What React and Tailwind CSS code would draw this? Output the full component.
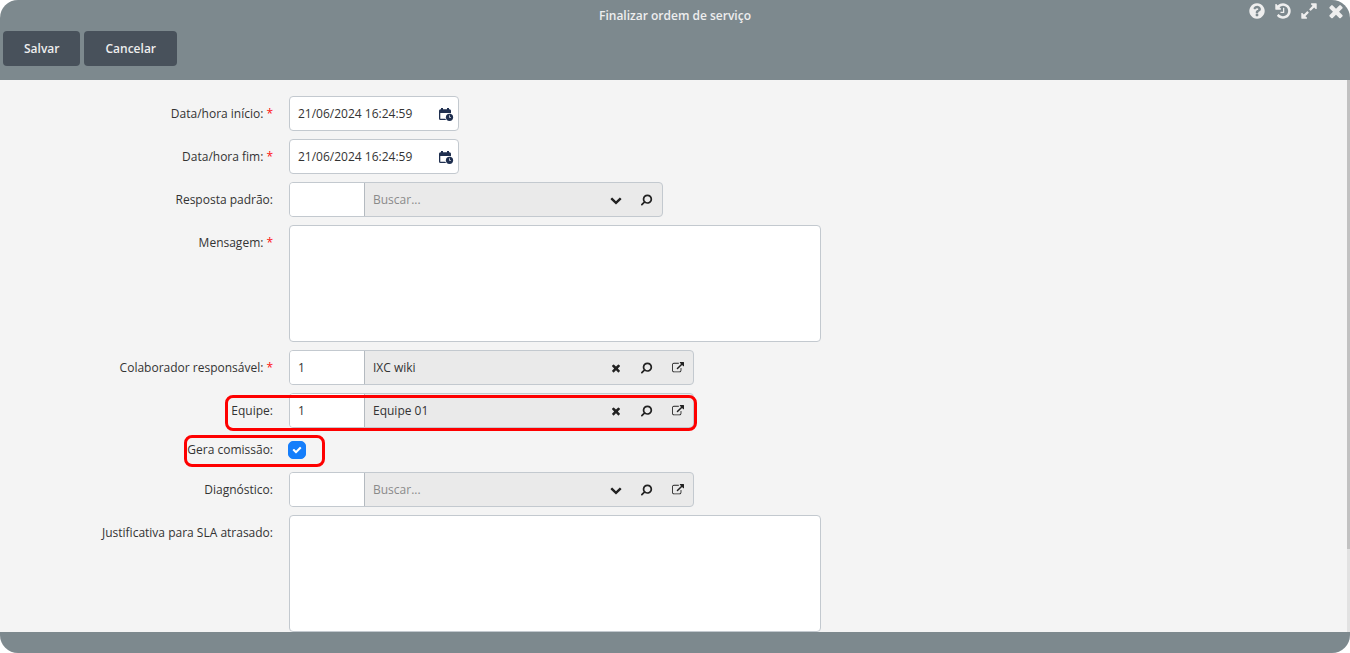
import React, { useState } from "react";

const ICONS = {
	help: "M1024 1376v-192q0-14-9-23t-23-9h-192q-14 0-23 9t-9 23v192q0 14 9 23t23 9h192q14 0 23-9t9-23zm256-672q0-88-55.5-163t-138.5-116-170-41q-243 0-371 213-15 24 8 42l132 100q7 6 19 6 16 0 25-12 53-68 86-92 34-24 86-24 48 0 85.5 26t37.5 59q0 38-20 61t-68 45q-63 28-115.5 86.5t-52.5 125.5v36q0 14 9 23t23 9h192q14 0 23-9t9-23q0-19 21.5-49.5t54.5-49.5q32-18 49-28.5t46-35 44.5-48 28-60.5 12.5-81zm384 192q0 209-103 385.5t-279.5 279.5-385.5 103-385.5-103-279.5-279.5-103-385.5 103-385.5 279.5-279.5 385.5-103 385.5 103 279.5 279.5 103 385.5z",
	history:
		"M1664 896q0 156-61 298t-164 245-245 164-298 61q-172 0-327-72.5t-264-204.5q-7-10-6.5-22.5t8.5-20.5l137-138q10-9 25-9 16 2 23 12 73 95 179 147t225 52q104 0 198.5-40.5t163.5-109.5 109.5-163.5 40.5-198.5-40.5-198.5-109.5-163.5-163.5-109.5-198.5-40.5q-98 0-188 35.5t-160 101.5l137 138q31 30 14 69-17 40-59 40h-448q-26 0-45-19t-19-45v-448q0-42 40-59 39-17 69 14l130 129q107-101 244.5-156.5t284.5-55.5q156 0 298 61t245 164 164 245 61 298zm-640-288v448q0 14-9 23t-23 9h-320q-14 0-23-9t-9-23v-64q0-14 9-23t23-9h224v-352q0-14 9-23t23-9h64q14 0 23 9t9 23z",
	expand: "M883 1056q0 13-10 23l-332 332 144 144q19 19 19 45t-19 45-45 19h-448q-26 0-45-19t-19-45v-448q0-26 19-45t45-19 45 19l144 144 332-332q10-10 23-10t23 10l114 114q10 10 10 23zm781-864v448q0 26-19 45t-45 19-45-19l-144-144-332 332q-10 10-23 10t-23-10l-114-114q-10-10-10-23t10-23l332-332-144-144q-19-19-19-45t19-45 45-19h448q26 0 45 19t19 45z",
	times: "M1490 1322q0 40-28 68l-136 136q-28 28-68 28t-68-28l-294-294-294 294q-28 28-68 28t-68-28l-136-136q-28-28-28-68t28-68l294-294-294-294q-28-28-28-68t28-68l136-136q28-28 68-28t68 28l294 294 294-294q28-28 68-28t68 28l136 136q28 28 28 68t-28 68l-294 294 294 294q28 28 28 68z",
	chevron:
		"M1683 808l-742 741q-19 19-45 19t-45-19l-742-741q-19-19-19-45.5t19-45.5l166-165q19-19 45-19t45 19l531 531 531-531q19-19 45-19t45 19l166 165q19 19 19 45.5t-19 45.5z",
	search: "M1216 832q0-185-131.5-316.5t-316.5-131.5-316.5 131.5-131.5 316.5 131.5 316.5 316.5 131.5 316.5-131.5 131.5-316.5zm512 832q0 52-38 90t-90 38q-54 0-90-38l-343-342q-179 124-399 124-143 0-273.5-55.5t-225-150-150-225-55.5-273.5 55.5-273.5 150-225 225-150 273.5-55.5 273.5 55.5 225 150 150 225 55.5 273.5q0 220-124 399l343 343q37 37 37 90z",
	external:
		"M1408 928v320q0 119-84.5 203.5t-203.5 84.5h-832q-119 0-203.5-84.5t-84.5-203.5v-832q0-119 84.5-203.5t203.5-84.5h704q14 0 23 9t9 23v64q0 14-9 23t-23 9h-704q-66 0-113 47t-47 113v832q0 66 47 113t113 47h832q66 0 113-47t47-113v-320q0-14 9-23t23-9h64q14 0 23 9t9 23zm384-864v512q0 26-19 45t-45 19-45-19l-176-176-652 652q-10 10-23 10t-23-10l-114-114q-10-10-10-23t10-23l652-652-176-176q-19-19-19-45t19-45 45-19h512q26 0 45 19t19 45z",
	check: "M1671 566q0 40-28 68l-724 724-136 136q-28 28-68 28t-68-28l-136-136-362-362q-28-28-28-68t28-68l136-136q28-28 68-28t68 28l294 295 656-657q28-28 68-28t68 28l136 136q28 28 28 68z",
};

const Icon = ({ name, className }) => (
	<svg viewBox="0 0 1792 1792" fill="currentColor" className={className}>
		<path d={ICONS[name]} />
	</svg>
);

const CalendarClockIcon = () => (
	<svg viewBox="0 0 16 16" className="w-4 h-4" fill="#1f2f4f">
		<path
			fillRule="evenodd"
			d="M3 2h2v1.300h4V2h2v1.300h.5A1.500 1.500 0 0 1 13 4.800V14H2.500A1.500 1.500 0 0 1 1 12.500V4.800A1.500 1.500 0 0 1 2.500 3.300H3zM2.300 7v5.700h9.400V7z"
		/>
		<circle cx="11.500" cy="11.300" r="4.400" fill="#fff" />
		<circle cx="11.500" cy="11.300" r="3.600" />
		<path
			d="M11.500 9.300v2.200h1.400"
			fill="none"
			stroke="#fff"
			strokeWidth="0.700"
		/>
	</svg>
);

const Row = ({ id, label, required, children }) => (
	<div className="relative flex items-start gap-4">
		<label
			htmlFor={id}
			className="w-[273px] h-[35px] shrink-0 flex items-center justify-end gap-[3px]"
		>
			{label}:{required && <span className="text-[#fe1010]">*</span>}
		</label>
		{children}
	</div>
);

const DateField = ({ id, value, onChange }) => (
	<div className="flex items-center w-[170px] h-[35px] pr-1 bg-white border border-[#c3c9cf] rounded">
		<input
			type="text"
			id={id}
			name={id}
			value={value}
			onChange={onChange}
			className="flex-1 min-w-0 h-full px-2 focus:outline-none"
		/>
		<button type="button" aria-label="Abrir calendário">
			<CalendarClockIcon />
		</button>
	</div>
);

const LookupField = ({ id, code, text, onChange, external }) => (
	<div className="flex h-[35px] bg-[#eaeaea] border border-[#c3c9cf] rounded overflow-hidden">
		<input
			type="text"
			id={id}
			name={id}
			value={code}
			onChange={onChange}
			className="w-[75px] px-2 bg-white border-r border-[#b4bac0] focus:outline-none"
		/>
		<input
			type="text"
			aria-label="Buscar"
			placeholder="Buscar..."
			defaultValue={text}
			className="w-[235px] px-2 placeholder:text-[#8a8a8a] focus:outline-none"
		/>
		<div className="flex items-center text-[#222]">
			<button
				type="button"
				aria-label={text ? "Limpar" : "Abrir lista"}
				className="w-[31px] flex justify-center"
			>
				<Icon name={text ? "times" : "chevron"} className="w-3 h-3" />
			</button>
			<button
				type="button"
				aria-label="Pesquisar"
				className="w-[31px] flex justify-center"
			>
				<Icon name="search" className="w-3 h-3 rotate-90" />
			</button>
			{external && (
				<button
					type="button"
					aria-label="Abrir cadastro"
					className="w-[31px] flex justify-center"
				>
					<Icon name="external" className="w-3 h-3" />
				</button>
			)}
		</div>
	</div>
);

const App = () => {
	const [formData, setFormData] = useState({
		inicio: "21/06/2024 16:24:59",
		fim: "21/06/2024 16:24:59",
		resposta: "",
		mensagem: "",
		colaborador: "1",
		equipe: "1",
		comissao: true,
		diagnostico: "",
		justificativa: "",
	});

	const handleChange = (e) => {
		const { name, value, type, checked } = e.target;
		setFormData({
			...formData,
			[name]: type === "checkbox" ? checked : value,
		});
	};

	return (
		<div className="h-screen bg-white font-['Open_Sans',sans-serif] text-xs text-[#333]">
			<div className="h-full flex flex-col bg-[#7d898e] rounded-[18px] overflow-hidden">
				{/* Title bar and actions */}
				<header className="relative h-20 shrink-0 px-[3px]">
					<h1 className="h-[31px] flex items-center justify-center font-semibold text-[#eee]">
						Finalizar ordem de serviço
					</h1>
					<div className="absolute top-px right-1 flex items-center gap-2 text-[#eee]">
						<button type="button" aria-label="Ajuda">
							<Icon name="help" className="w-[18px] h-[18px]" />
						</button>
						<button type="button" aria-label="Histórico">
							<Icon name="history" className="w-[18px] h-[18px]" />
						</button>
						<button type="button" aria-label="Expandir">
							<Icon name="expand" className="w-[18px] h-[18px]" />
						</button>
						<button type="button" aria-label="Fechar">
							<Icon name="times" className="w-5 h-5" />
						</button>
					</div>
					<div className="flex gap-1">
						<button
							type="button"
							className="h-[35px] px-[21px] bg-[#48515b] text-[#eee] font-semibold rounded"
						>
							Salvar
						</button>
						<button
							type="button"
							className="h-[35px] px-[21px] bg-[#48515b] text-[#eee] font-semibold rounded"
						>
							Cancelar
						</button>
					</div>
				</header>

				<main className="relative flex-1 min-h-0 overflow-hidden bg-[#f4f4f4]">
					<form className="flex flex-col gap-2 pt-4">
						<Row id="inicio" label="Data/hora início" required>
							<DateField
								id="inicio"
								value={formData.inicio}
								onChange={handleChange}
							/>
						</Row>
						<Row id="fim" label="Data/hora fim" required>
							<DateField
								id="fim"
								value={formData.fim}
								onChange={handleChange}
							/>
						</Row>
						<Row id="resposta" label="Resposta padrão">
							<LookupField
								id="resposta"
								code={formData.resposta}
								onChange={handleChange}
							/>
						</Row>
						<Row id="mensagem" label="Mensagem" required>
							<textarea
								id="mensagem"
								name="mensagem"
								value={formData.mensagem}
								onChange={handleChange}
								className="w-[532px] h-[117px] p-2 bg-white border border-[#c3c9cf] rounded resize-none focus:outline-none"
							/>
						</Row>
						<Row
							id="colaborador"
							label="Colaborador responsável"
							required
						>
							<LookupField
								id="colaborador"
								code={formData.colaborador}
								text="IXC wiki"
								onChange={handleChange}
								external
							/>
						</Row>
						<Row id="equipe" label="Equipe">
							<LookupField
								id="equipe"
								code={formData.equipe}
								text="Equipe 01"
								onChange={handleChange}
								external
							/>
							<div className="absolute top-0.5 left-[225px] w-[472px] h-9 border-3 border-[#fe0000] rounded-lg pointer-events-none" />
						</Row>
						<div className="relative flex items-center gap-4 h-7">
							<label
								htmlFor="comissao"
								className="w-[273px] text-right"
							>
								Gera comissão:
							</label>
							<div className="relative w-4 h-[18px]">
								<input
									type="checkbox"
									id="comissao"
									name="comissao"
									checked={formData.comissao}
									onChange={handleChange}
									className="peer absolute top-0 -left-px w-[18px] h-[18px] appearance-none bg-white border border-[#c3c9cf] checked:bg-[#157efb] checked:border-[#157efb] rounded-[5px]"
								/>
								<Icon
									name="check"
									className="absolute top-1 left-[3px] w-2.5 h-2.5 text-white invisible peer-checked:visible pointer-events-none"
								/>
							</div>
							<div className="absolute -top-px left-[184px] w-[141px] h-8 border-3 border-[#fe0000] rounded-lg pointer-events-none" />
						</div>
						<Row id="diagnostico" label="Diagnóstico">
							<LookupField
								id="diagnostico"
								code={formData.diagnostico}
								onChange={handleChange}
								external
							/>
						</Row>
						<Row
							id="justificativa"
							label="Justificativa para SLA atrasado"
						>
							<textarea
								id="justificativa"
								name="justificativa"
								value={formData.justificativa}
								onChange={handleChange}
								className="w-[532px] h-[117px] p-2 bg-white border border-[#c3c9cf] rounded resize-none focus:outline-none"
							/>
						</Row>
					</form>

					{/* Scrollbar */}
					<div className="absolute inset-y-0 right-0 w-[3px] bg-[#e2e2e2]">
						<div className="h-[85%] bg-[#c1c1c1]" />
					</div>
				</main>

				<footer className="h-[21px] shrink-0" />
			</div>
		</div>
	);
};

export default App;
